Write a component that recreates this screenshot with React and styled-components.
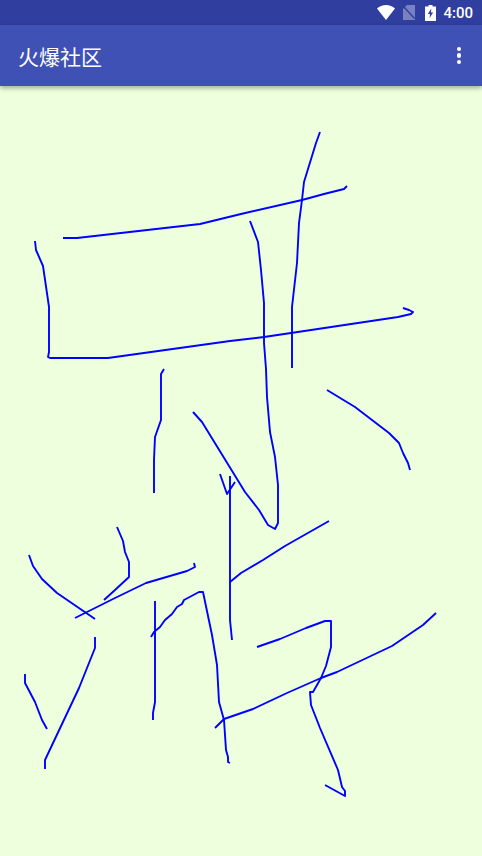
import React from "react";
import styled, { createGlobalStyle } from "styled-components";

const Global = createGlobalStyle`
  html, body {
    margin: 0;
    padding: 0;
    height: 100%;
    background: #eeffdd;
  }
`;

const Screen = styled.div`
  width: 482px;
  height: 856px;
  display: flex;
  flex-direction: column;
  overflow: hidden;
  background: #eeffdd;
`;

const StatusBar = styled.div`
  height: 25px;
  flex: none;
  display: flex;
  align-items: center;
  justify-content: flex-end;
  padding-right: 9px;
  background: #303f9f;
  color: #fff;
`;

const StatusIcon = styled.svg`
  display: block;
  flex: none;
  margin-right: ${(props) => props.gap}px;
`;

const Time = styled.span`
  font-family: Roboto, "Liberation Sans", sans-serif;
  font-size: 15px;
  font-weight: 500;
`;

const Toolbar = styled.div`
  height: 61px;
  flex: none;
  display: flex;
  align-items: center;
  justify-content: space-between;
  padding: 0 21px 0 18px;
  background: #3f51b5;
  box-shadow: 0 2px 5px rgba(0, 0, 0, 0.35);
  position: relative;
  z-index: 1;
`;

const Title = styled.h1`
  margin: 0;
  font-family: "Noto Sans CJK SC", "Noto Sans", sans-serif;
  font-size: 21px;
  font-weight: 400;
  color: #fff;
`;

const Overflow = styled.div`
  display: flex;
  flex-direction: column;
  gap: 2px;
`;

const Dot = styled.span`
  width: 4.5px;
  height: 4.5px;
  border-radius: 50%;
  background: #fff;
`;

const Canvas = styled.svg`
  display: block;
  flex: 1;
  width: 482px;
`;

const strokes = [
  "35,241 36,250 43,266 49,307 49,352 48,357 50,358 108,358 230,341 264,337 291,333 398,317 411,314 413,312 409,310 403,308",
  "63,238 77,238 200,224 241,214 302,200 324,194 344,189 347,186",
  "320,132 316,143 304,182 302,200 299,223 297,263 292,307 292,368",
  "250,221 258,242 261,270 264,303 264,343 266,369 267,397 270,432 275,457 278,485 278,523 275,529 268,525 259,510 245,492 202,422 193,412",
  "164,369 161,374 161,420 155,437 154,460 154,493",
  "327,390 355,407 389,433 399,443 403,453 408,463 410,470",
  "220,474 227,494 235,482",
  "230,476 230,620 232,640",
  "230,582 241,573 263,560 285,546 329,521",
  "29,555 33,566 42,579 57,593 95,619",
  "117,527 123,541 125,552 129,562 129,577 115,590 104,600",
  "75,618 115,598 146,583 187,571 195,567 194,563",
  "95,637 95,648 79,688 45,760 45,769",
  "25,674 25,683 35,702 42,720 47,729",
  "155,601 155,702 153,713 153,720",
  "151,637 154,632 160,627 165,620 172,614 177,607 182,604 184,600 199,592 203,592 212,635 217,665 219,702 224,720 226,750 228,757 228,762 230,763",
  "215,728 224,719 253,709 287,693 321,678 337,672 392,646 423,625 436,613",
  "257,647 280,639 306,628 325,621 331,621 331,647 326,666 321,678 313,692 310,692 311,705 320,728 338,770 342,787 345,791 345,796 325,785",
];

export default function App() {
  return (
    <Screen>
      <Global />
      <StatusBar>
        <StatusIcon gap={8} width="18" height="15" viewBox="0 0 18 15">
          <path d="M0 3.4C2.4 1.3 5.6 0 9 0s6.6 1.3 9 3.4L9 15z" fill="#fff" />
        </StatusIcon>
        <StatusIcon gap={10} width="12" height="15" viewBox="0 0 12 15">
          <path d="M4 0h8v15H0V4z" fill="#fff" fillOpacity="0.35" />
          <path d="M0.5 1.5l11 12" stroke="#303f9f" strokeWidth="1.4" />
        </StatusIcon>
        <StatusIcon gap={7} width="11" height="16" viewBox="0 0 11 16">
          <path
            d="M3.5 0h4v1.5H11V16H0V1.5h3.5zM6.3 3.5L2.8 9H5l-.4 4 3.6-5.5H6z"
            fill="#fff"
            fillRule="evenodd"
          />
        </StatusIcon>
        <Time>4:00</Time>
      </StatusBar>
      <Toolbar>
        <Title>火爆社区</Title>
        <Overflow>
          <Dot />
          <Dot />
          <Dot />
        </Overflow>
      </Toolbar>
      <Canvas viewBox="0 86 482 770">
        {strokes.map((points) => (
          <polyline
            key={points}
            points={points}
            fill="none"
            stroke="#0000ff"
            strokeWidth="1.9"
            strokeLinejoin="round"
          />
        ))}
      </Canvas>
    </Screen>
  );
}
